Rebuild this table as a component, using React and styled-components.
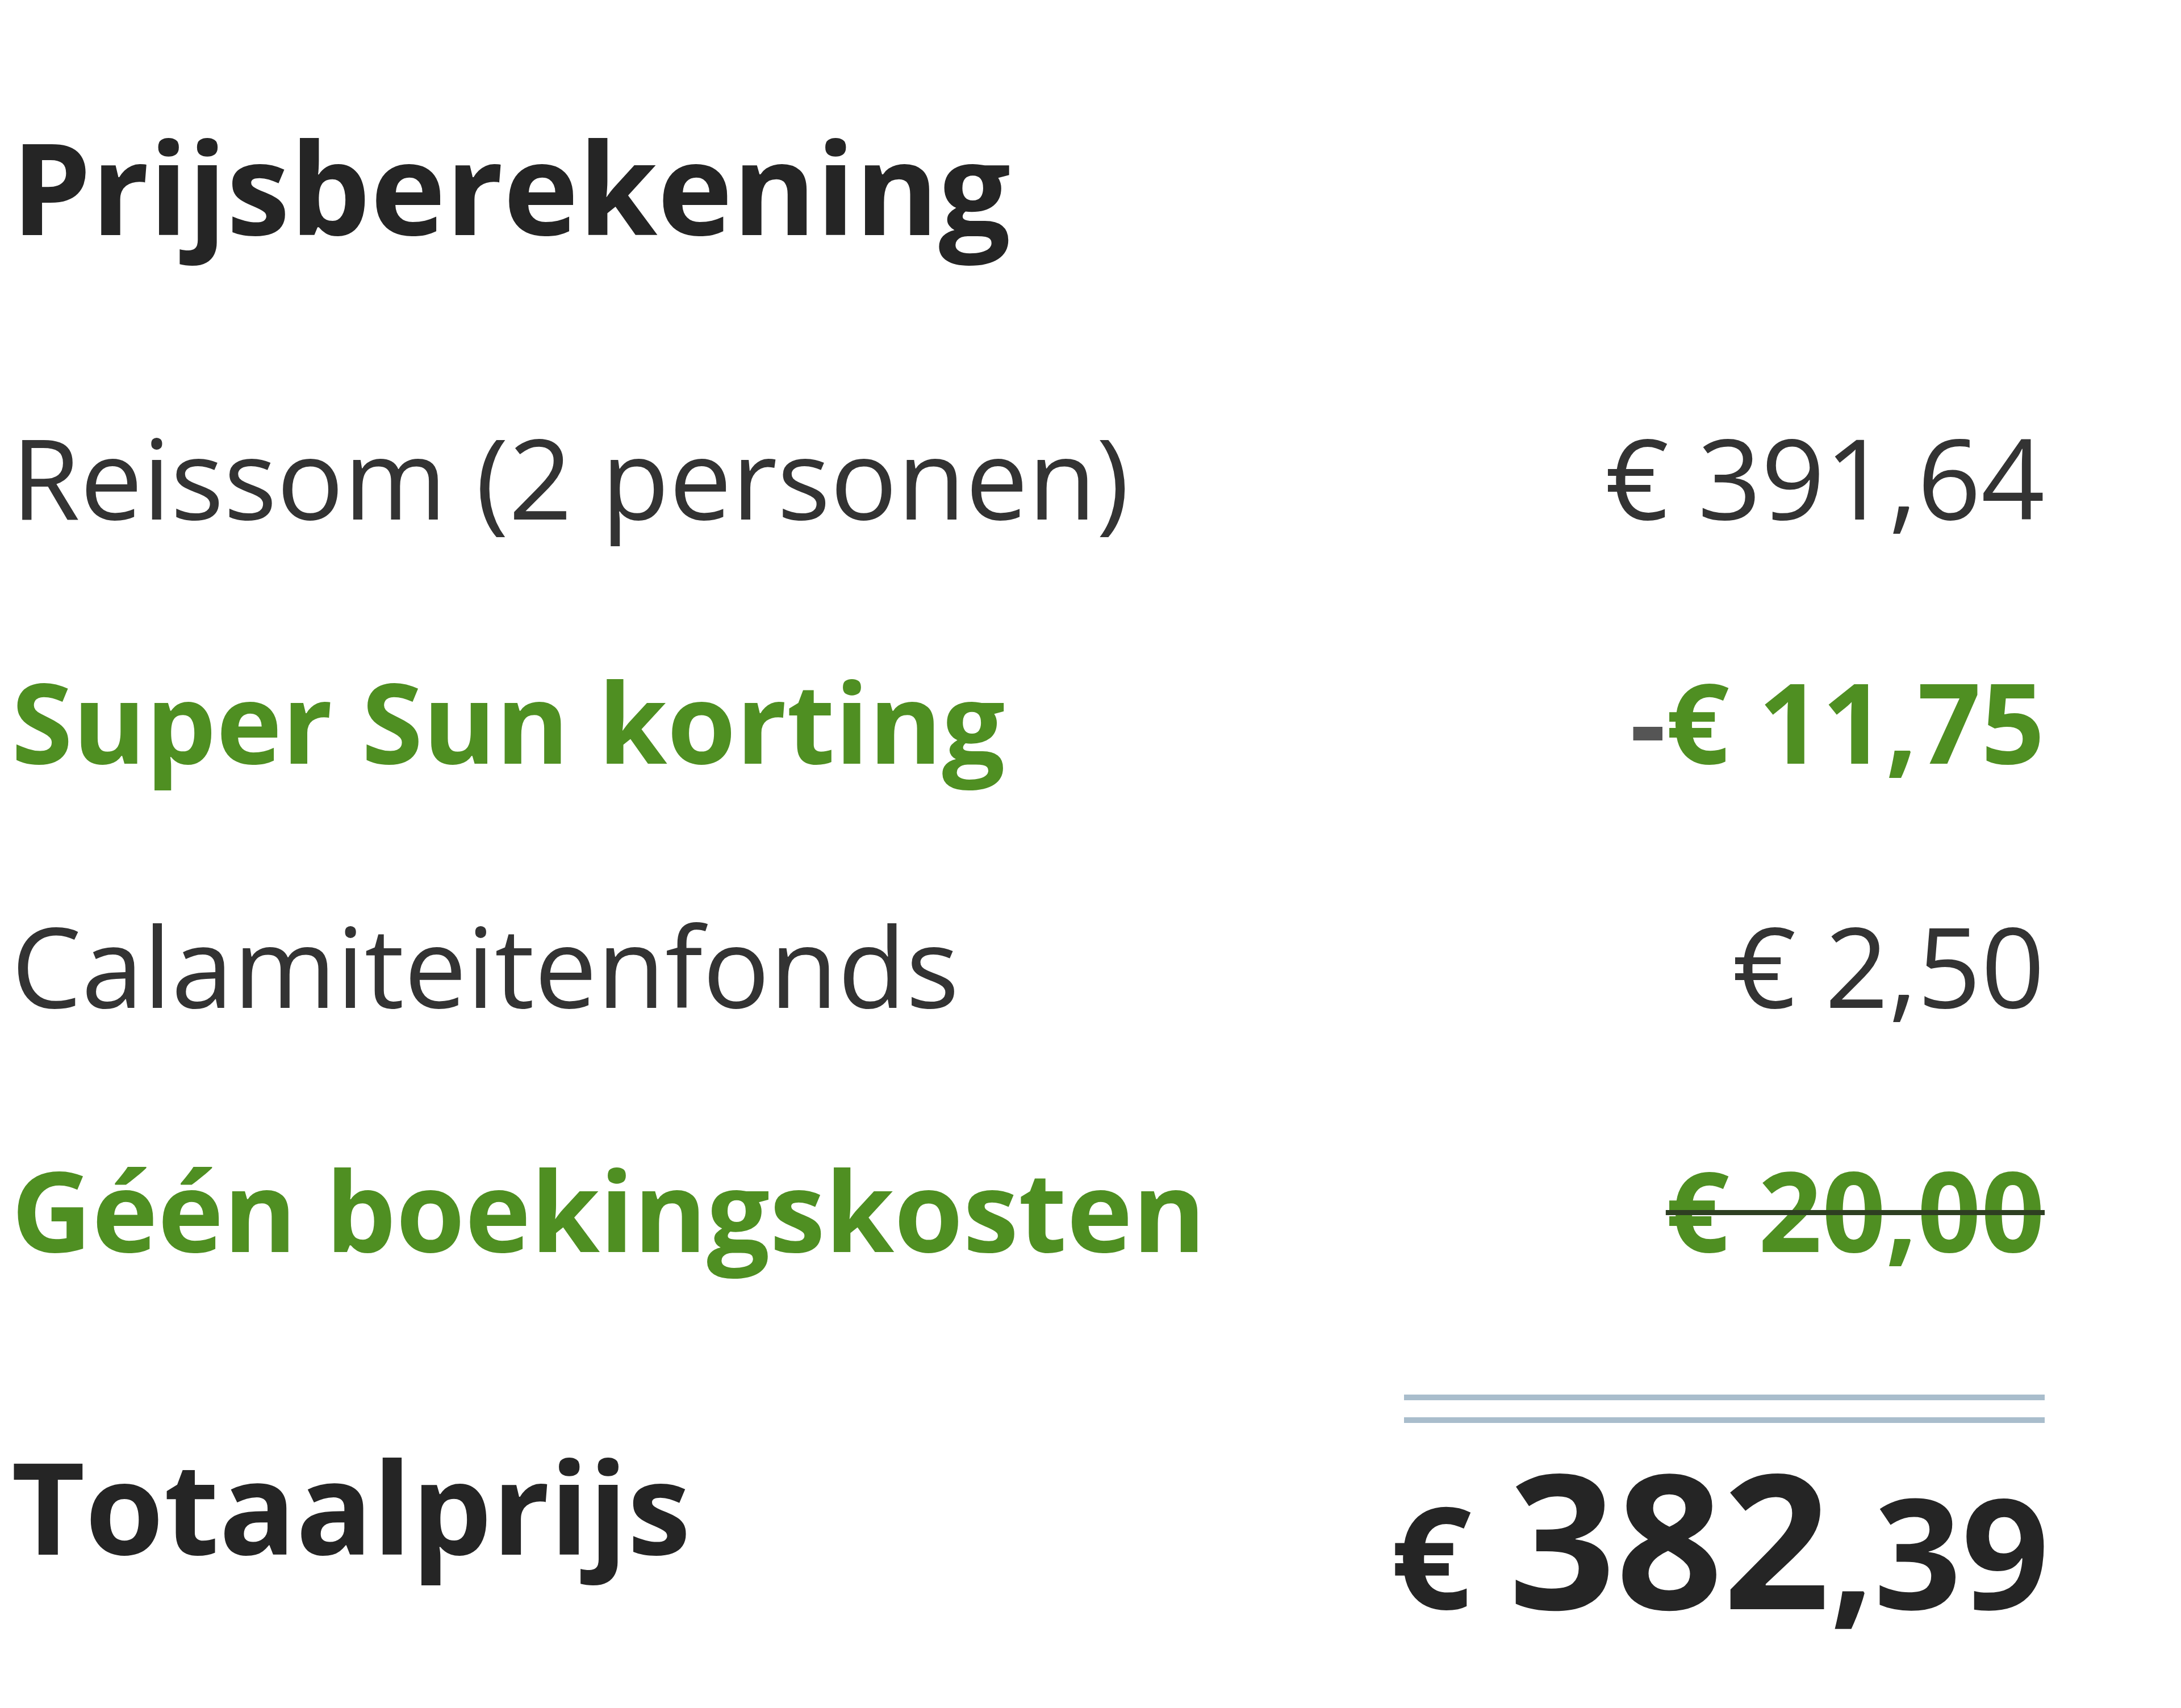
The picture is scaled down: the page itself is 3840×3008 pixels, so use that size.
import React from 'react';
import styled, { createGlobalStyle } from 'styled-components';

const GlobalStyle = createGlobalStyle`
  html, body {
    margin: 0;
    padding: 0;
    background: #ffffff;
  }
  body {
    font-family: "Open Sans", "Noto Sans", Arial, sans-serif;
    color: #333333;
  }
`;

const Panel = styled.section`
  box-sizing: border-box;
  width: 3600px;
  padding: 175px 0 160px 20px;
`;

const Title = styled.h2`
  margin: 0 0 144px;
  font-size: 224px;
  font-weight: 700;
  line-height: 305px;
  color: #252525;
`;

const Row = styled.div`
  display: flex;
  justify-content: space-between;
  align-items: baseline;
  height: 430px;
  line-height: 430px;
  font-size: 196px;
  font-weight: ${(p) => (p.$accent ? 700 : 400)};
  color: ${(p) => (p.$accent ? '#4f8f22' : '#333333')};
`;

const Amount = styled.span`
  white-space: nowrap;
  text-decoration: ${(p) => (p.$struck ? 'line-through' : 'none')};
  text-decoration-color: #2e3f22;
  text-decoration-thickness: 9px;
`;

const Minus = styled.span`
  color: #555555;
`;

const TotalRow = styled.div`
  display: flex;
  justify-content: space-between;
  align-items: flex-start;
  margin-top: 112px;
`;

const TotalLabel = styled.div`
  margin-top: 43px;
  font-size: 224px;
  font-weight: 700;
  line-height: 305px;
  color: #252525;
`;

const TotalBox = styled.div`
  display: flex;
  flex-direction: column;
  align-items: flex-end;
  width: 1128px;
`;

const DoubleRule = styled.div`
  box-sizing: border-box;
  width: 100%;
  height: 50px;
  border-top: 10px solid #a9bdcc;
  border-bottom: 10px solid #a9bdcc;
`;

const BigPrice = styled.div`
  margin-top: 35px;
  line-height: 330px;
  font-weight: 700;
  color: #252525;
  white-space: nowrap;
  margin-right: -8px;
`;

const Part = styled.span`
  font-size: ${(p) => p.$size}px;
`;

const lines = [
  { label: 'Reissom (2 personen)', amount: '€ 391,64' },
  { label: 'Super Sun korting', amount: '€ 11,75', accent: true, minus: true },
  { label: 'Calamiteitenfonds', amount: '€ 2,50' },
  { label: 'Géén boekingskosten', amount: '€ 20,00', accent: true, struck: true },
];

export default function App() {
  return (
    <>
      <GlobalStyle />
      <Panel>
        <Title>Prijsberekening</Title>
        {lines.map((line) => (
          <Row key={line.label} $accent={line.accent}>
            <span>{line.label}</span>
            <Amount $struck={line.struck}>
              {line.minus && <Minus>-</Minus>}
              {line.amount}
            </Amount>
          </Row>
        ))}
        <TotalRow>
          <TotalLabel>Totaalprijs</TotalLabel>
          <TotalBox>
            <DoubleRule />
            <BigPrice>
              <Part $size={250}>€ </Part>
              <Part $size={330}>382</Part>
              <Part $size={270}>,39</Part>
            </BigPrice>
          </TotalBox>
        </TotalRow>
      </Panel>
    </>
  );
}
